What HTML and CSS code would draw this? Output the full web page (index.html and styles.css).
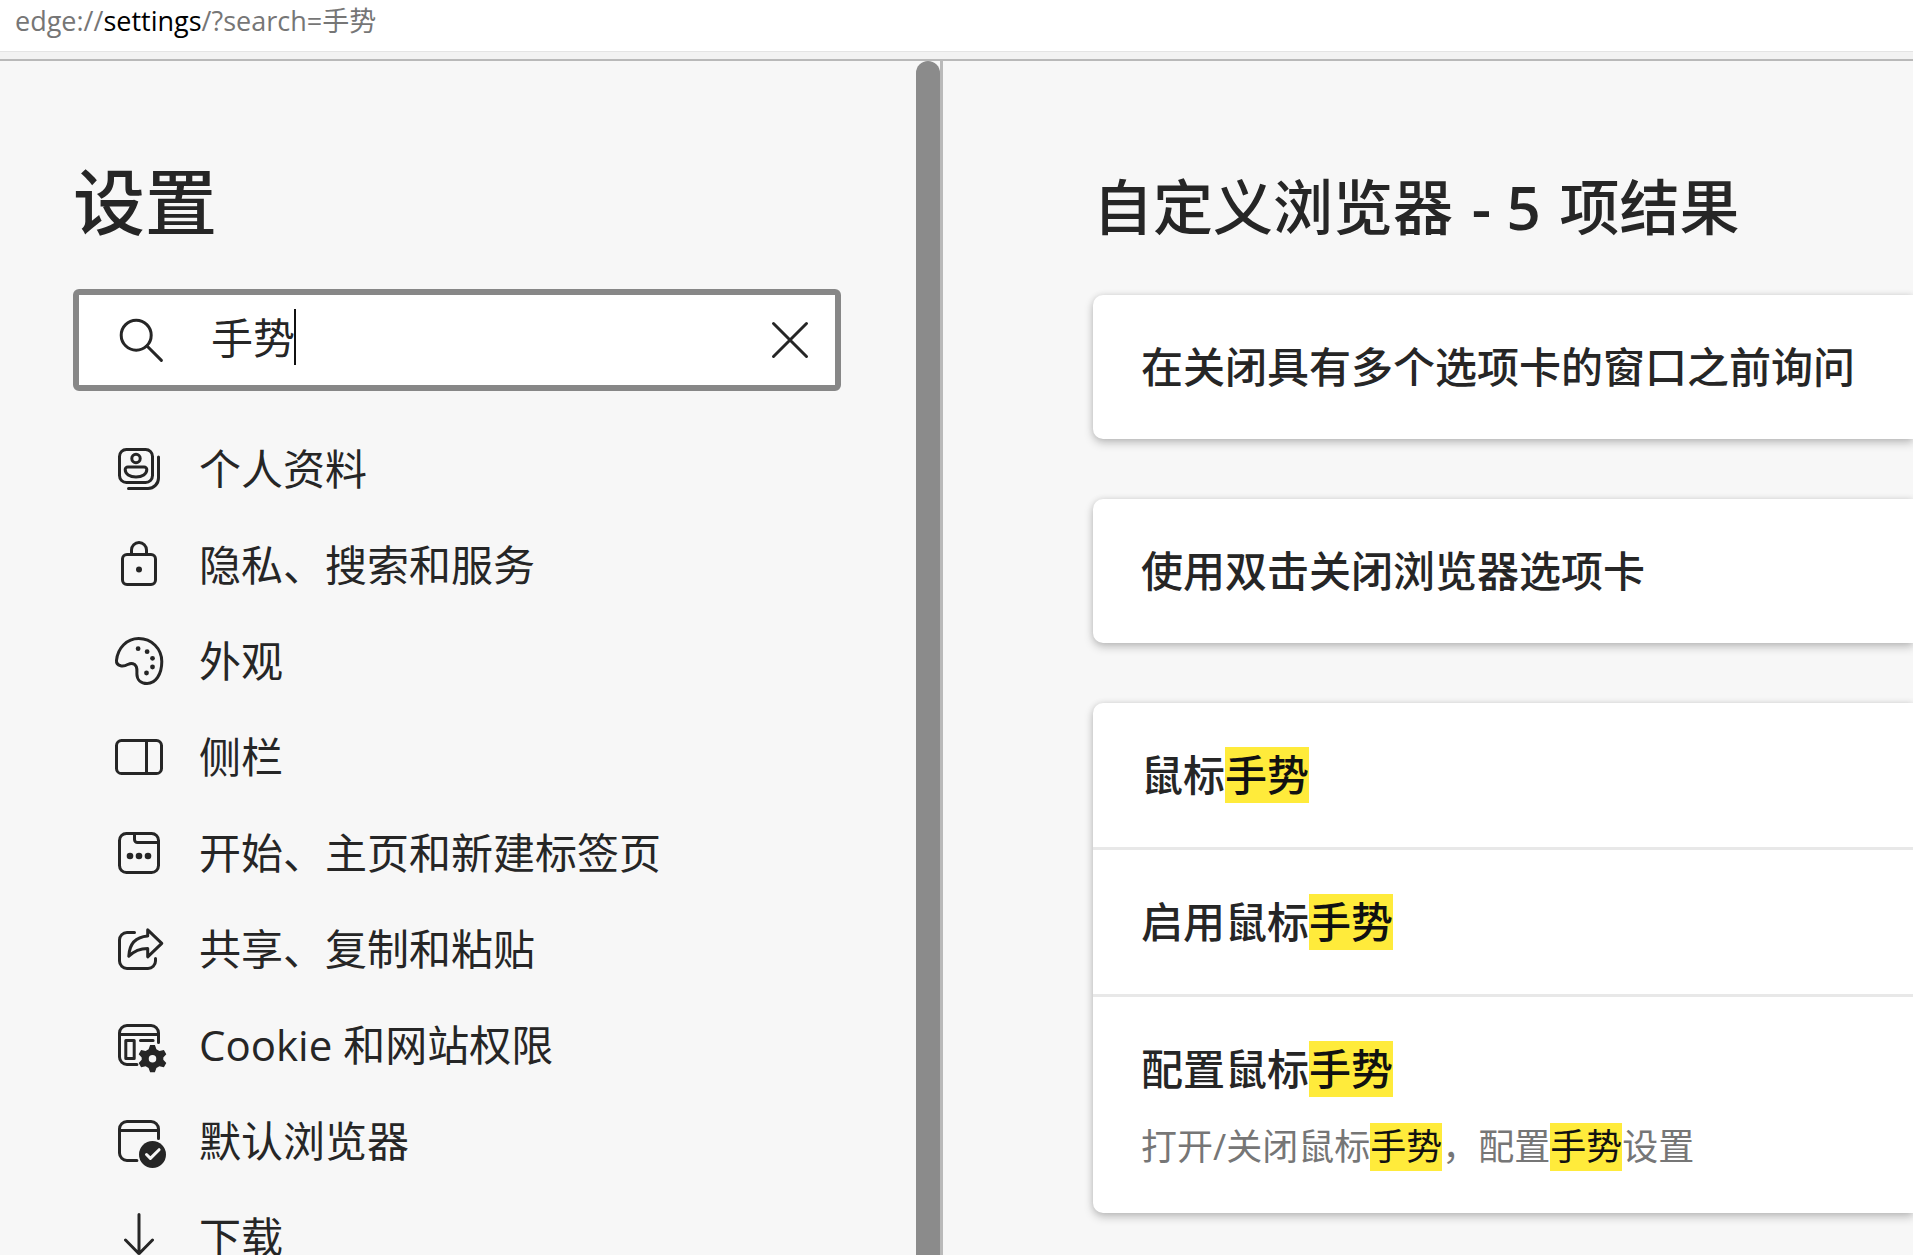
FILE: index.html
```html
<!DOCTYPE html>
<html lang="zh-CN">
<head>
<meta charset="utf-8">
<title>设置</title>
<link rel="stylesheet" href="styles.css">
</head>
<body>
<header class="address">
  <span>edge://<b>settings</b>/?search=手势</span>
</header>
<div class="content">
  <aside class="sidebar">
    <div class="sidebar-body">
      <h1>设置</h1>
      <form class="search" role="search">
        <svg class="search-icon" viewBox="0 0 20 20" aria-hidden="true"><circle cx="8.4" cy="8.4" r="5"/><path d="M12 12l4.8 4.8"/></svg>
        <div class="field">
          <input type="text" aria-label="搜索设置" value="手势">
          <span class="caret"></span>
        </div>
        <button type="button" class="clear" aria-label="清除">
          <svg viewBox="0 0 20 20" aria-hidden="true"><path d="M4.500 4.500l11 11M15.500 4.500l-11 11"/></svg>
        </button>
      </form>
      <nav>
        <a href="#profiles"><svg viewBox="0 0 20 20" aria-hidden="true"><rect x="3.500" y="3.500" width="11" height="11" rx="2.300"/><circle cx="9" cy="6.500" r="1.400"/><path d="M6.300 9.300h5.400a.9.9 0 0 1 .9.9c0 1.500-1.500 2.500-3.600 2.500s-3.600-1-3.600-2.500a.9.9 0 0 1 .9-.9z"/><path d="M16.500 6v7a3.500 3.500 0 0 1-3.500 3.500H6.500"/></svg>个人资料</a>
        <a href="#privacy"><svg viewBox="0 0 20 20" aria-hidden="true"><rect x="4.500" y="6.500" width="11" height="10" rx="1.500"/><path d="M7.500 6.500V5a2.500 2.500 0 0 1 5 0v1.500"/><circle class="solid" cx="10" cy="11.500" r="1"/></svg>隐私、搜索和服务</a>
        <a href="#appearance"><svg viewBox="0 0 20 20" aria-hidden="true"><path d="M2.500 9.800C2.900 5.600 6 2.500 9.900 2.500c4.300 0 7.700 3.400 7.700 7.700 0 4.300-2.100 7.300-4.900 7.300-2.100 0-3.400-1.300-3.400-3.200 0-.9.100-1.700-.2-2.400-.5-1-1.600-1.300-2.700-.8-.9.500-1.600.8-2.500.500-1-.3-1.500-.9-1.400-1.800z"/><g class="solid"><circle cx="9.700" cy="5.900" r=".8"/><circle cx="12.700" cy="6.900" r=".8"/><circle cx="14.500" cy="9.100" r=".8"/><circle cx="14.500" cy="12" r=".8"/><circle cx="12.500" cy="14" r=".8"/></g></svg>外观</a>
        <a href="#sidebar"><svg viewBox="0 0 20 20" aria-hidden="true"><rect x="2.500" y="4.500" width="15" height="11" rx="1.700"/><path d="M12.500 4.500v11"/></svg>侧栏</a>
        <a href="#start"><svg viewBox="0 0 20 20" aria-hidden="true"><rect x="3.500" y="3.500" width="13" height="13" rx="2.300"/><path d="M8.500 3.500v2a1 1 0 0 0 1 1h7"/><g class="solid"><circle cx="7" cy="11" r="1.100"/><circle cx="10" cy="11" r="1.100"/><circle cx="13" cy="11" r="1.100"/></g></svg>开始、主页和新建标签页</a>
        <a href="#share"><svg viewBox="0 0 20 20" aria-hidden="true"><path d="M8.500 4.500H6A2.500 2.500 0 0 0 3.500 7v7A2.500 2.500 0 0 0 6 16.500h7a2.500 2.500 0 0 0 2.500-2.500v-.8"/><path d="M12.900 3.600l4.700 4.500-4.700 4.500V9.800c-2.600 0-4.500.8-6.300 2.600.2-4 2.300-6.400 6.300-6.700z"/></svg>共享、复制和粘贴</a>
        <a href="#permissions"><svg viewBox="0 0 20 20" aria-hidden="true"><path d="M9.300 16.500H6A2.500 2.500 0 0 1 3.500 14V6A2.500 2.500 0 0 1 6 3.500h8A2.500 2.500 0 0 1 16.500 6v3.200M3.500 6.500h13M10.500 8.500h4.200M5.600 8.500h2.800v6H5.600z"/><path class="solid" fill-rule="evenodd" d="M13.700 10h1.600l.5 1.400 1 .6 1.500-.3.8 1.400-1 1.100v.7l1 1.100-.8 1.400-1.500-.3-1 .6-.5 1.400h-1.600l-.5-1.400-1-.6-1.500.3-.8-1.400 1-1.100v-.7l-1-1.100.8-1.400 1.500.3 1-.6zM14.500 13.300a1.250 1.250 0 1 0 0 2.500 1.250 1.250 0 0 0 0-2.500z"/></svg>Cookie 和网站权限</a>
        <a href="#default"><svg viewBox="0 0 20 20" aria-hidden="true"><path d="M9.300 16.500H6A2.500 2.500 0 0 1 3.500 14V6A2.500 2.500 0 0 1 6 3.500h8A2.500 2.500 0 0 1 16.500 6v3.200M3.500 6.500h13"/><circle class="solid" cx="14.500" cy="14.500" r="4.500"/><path class="tick" d="M12.500 14.500l1.300 1.300 2.900-2.900"/></svg>默认浏览器</a>
        <a href="#downloads"><svg viewBox="0 0 20 20" aria-hidden="true"><path d="M10 2.500v13M5.500 11l4.500 4.600 4.500-4.600"/></svg>下载</a>
      </nav>
    </div>
    <div class="scrollbar"></div>
  </aside>
  <main>
    <h2>自定义浏览器 <span class="count">- 5</span> 项结果</h2>
    <section class="card"><div class="row"><h3>在关闭具有多个选项卡的窗口之前询问</h3></div></section>
    <section class="card"><div class="row"><h3>使用双击关闭浏览器选项卡</h3></div></section>
    <section class="card">
      <div class="row"><h3>鼠标<mark>手势</mark></h3></div>
      <div class="row"><h3>启用鼠标<mark>手势</mark></h3></div>
      <div class="row detailed"><h3>配置鼠标<mark>手势</mark></h3><p>打开/关闭鼠标<mark>手势</mark>，配置<mark>手势</mark>设置</p></div>
    </section>
  </main>
</div>
</body>
</html>
```
FILE: styles.css
```css
* {
  box-sizing: border-box;
}

body {
  margin: 0;
  height: 100vh;
  display: flex;
  flex-direction: column;
  overflow: hidden;
  background: #f7f7f7;
  color: #262626;
  font-family: "Open Sans", "Noto Sans CJK SC", sans-serif;
}

h1, h2, h3, p {
  margin: 0;
}

svg {
  width: 60px;
  height: 60px;
  flex: none;
  fill: none;
  stroke: currentColor;
  stroke-width: 1;
  stroke-linecap: round;
  stroke-linejoin: round;
}

.solid {
  fill: currentColor;
  stroke: none;
}

.tick {
  stroke: #f7f7f7;
}

.address {
  flex: none;
  height: 61px;
  padding-left: 15px;
  background: linear-gradient(#fff 51px, #e4e4e4 51px, #e4e4e4 52px, #f2f2f2 52px);
  border-bottom: 2px solid #b9b9b9;
  color: #767676;
  font-size: 27px;
  line-height: 42px;
  white-space: nowrap;
}

.address b {
  color: #000;
  font-weight: 400;
}

.content {
  flex: 1;
  min-height: 0;
  display: flex;
}

.sidebar {
  width: 49.3%;
  flex: none;
  display: flex;
  border-right: 3px solid #b9b9b9;
}

.sidebar-body {
  flex: 1;
  min-width: 0;
  padding: 92px 75px 0 73px;
  overflow: hidden;
}

.scrollbar {
  width: 24px;
  border-radius: 12px 12px 0 0;
  background: #8b8b8b;
}

h1 {
  font-size: 72px;
  line-height: 96px;
  font-weight: 500;
}

.search {
  display: flex;
  align-items: center;
  height: 102px;
  margin: 40px 0 30px;
  padding: 0 15px 0 32px;
  border: 6px solid #878787;
  border-radius: 6px;
  background: #fff;
}

.field {
  position: relative;
  flex: 1;
  min-width: 0;
  margin: 0 0 6px 40px;
}

.field input {
  display: block;
  width: 100%;
  height: 56px;
  padding: 0 0 4px;
  border: 0;
  outline: 0;
  background: none;
  color: inherit;
  font: inherit;
  font-size: 42px;
}

.caret {
  position: absolute;
  left: 83px;
  top: 0;
  width: 2px;
  height: 56px;
  background: #111;
}

.clear {
  display: flex;
  padding: 0;
  border: 0;
  background: none;
  color: inherit;
}

nav a {
  display: flex;
  align-items: center;
  gap: 30px;
  height: 96px;
  padding-left: 36px;
  color: inherit;
  font-size: 42px;
  line-height: 60px;
  text-decoration: none;
  white-space: nowrap;
}

main {
  flex: 1;
  min-width: 0;
  padding: 106px 0 0 150px;
  overflow: hidden;
  white-space: nowrap;
}

h2 {
  margin-bottom: 48px;
  font-size: 60px;
  line-height: 80px;
  font-weight: 500;
}

.count {
  padding: 0 3px;
  font-weight: 600;
}

.card {
  margin-bottom: 60px;
  border-radius: 10px 0 0 10px;
  background: #fff;
  box-shadow: 0 4px 10px rgba(0, 0, 0, 0.22), 0 0 6px rgba(0, 0, 0, 0.1);
}

.row {
  padding: 44px 0 44px 48px;
}

.row.detailed {
  padding-bottom: 42px;
}

.row + .row {
  border-top: 3px solid #e8e8e8;
}

h3 {
  font-size: 42px;
  line-height: 56px;
  font-weight: 500;
}

p {
  margin-top: 26px;
  color: #767676;
  font-size: 36px;
  line-height: 48px;
}

mark {
  display: inline-block;
  background: #ffeb3b;
  color: #111;
}
```
